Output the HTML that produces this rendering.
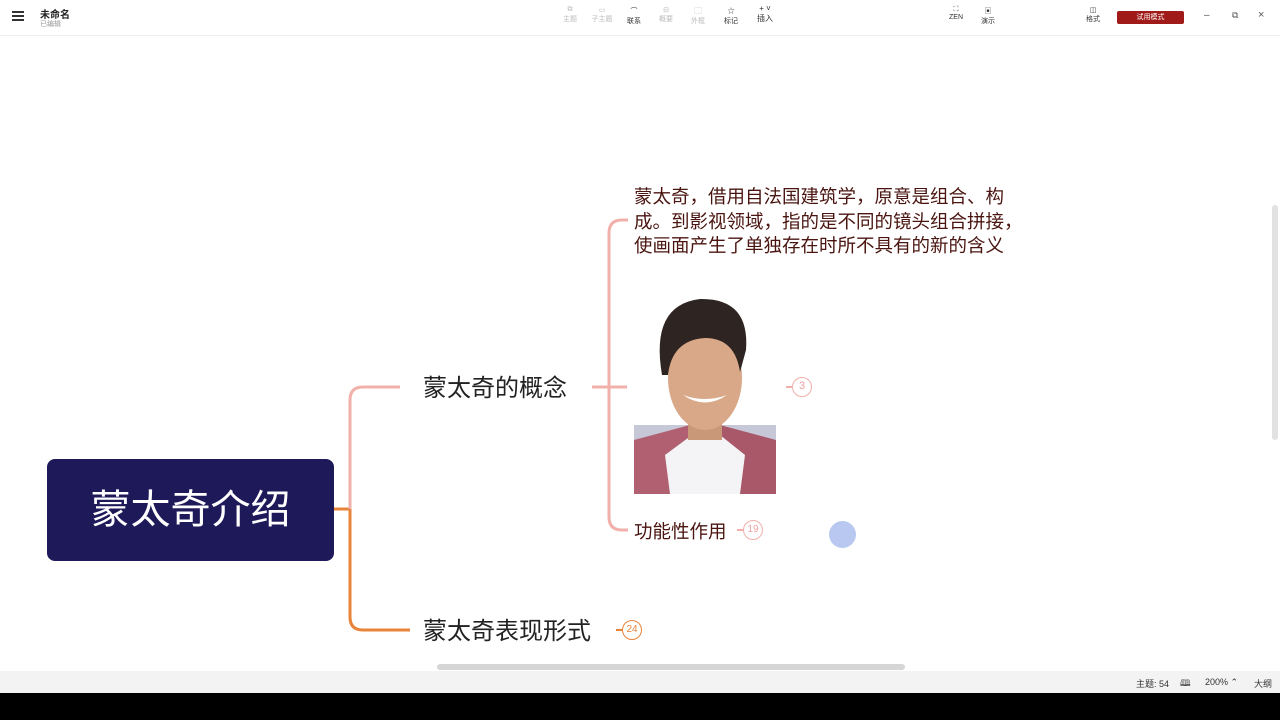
<!DOCTYPE html>
<html><head><meta charset="utf-8"><style>
*{margin:0;padding:0;box-sizing:border-box}
body{width:1280px;height:720px;overflow:hidden;background:#fff;font-family:"Liberation Sans","Noto Sans CJK SC",sans-serif;position:relative}
.abs{position:absolute}
.tb{top:0;left:0;width:1280px;height:36px;background:#fff;border-bottom:1px solid #eee}
.ti{font-size:7px;color:#bbb;text-align:center;width:24px}
.ti.d{color:#333}
.st{top:671px;left:0;width:1280px;height:22px;background:#f3f3f3;font-size:9px;color:#333}
.blk{top:693px;left:0;width:1280px;height:27px;background:#000}
.t{color:#222;font-size:24px}
.c{border:1.5px solid;border-radius:50%;font-size:11px;text-align:center;line-height:17px;width:20px;height:20px;background:#fff}
</style></head><body>
<div class="abs tb">
 <div class="abs" style="left:12px;top:11px;width:12px;height:2px;background:#333;box-shadow:0 4px 0 #333,0 8px 0 #333"></div>
 <div class="abs" style="left:40px;top:6px;font-size:10px;color:#222;font-weight:bold">未命名</div>
 <div class="abs" style="left:40px;top:19px;font-size:7px;color:#999">已编辑</div>
 <div class="abs ti" style="left:558px;top:6px">⧉<br>主题</div>
 <div class="abs ti" style="left:590px;top:6px">▭<br>子主题</div>
 <div class="abs ti d" style="left:622px;top:6px">⌒<br>联系</div>
 <div class="abs ti" style="left:654px;top:6px">⊟<br>概要</div>
 <div class="abs ti" style="left:686px;top:6px">▢<br>外框</div>
 <div class="abs ti d" style="left:719px;top:6px">☆<br>标记</div>
 <div class="abs ti d" style="left:753px;top:4px;font-size:8px">+ ˅<br>插入</div>
 <div class="abs ti d" style="left:944px;top:6px">⛶<br>ZEN</div>
 <div class="abs ti d" style="left:976px;top:6px">▣<br>演示</div>
 <div class="abs ti d" style="left:1081px;top:6px">◫<br>格式</div>
 <div class="abs" style="left:1117px;top:11px;width:67px;height:13px;background:#a11a1a;border-radius:2px;color:#fff;font-size:7px;text-align:center;line-height:13px">试用模式</div>
 <div class="abs" style="left:1204px;top:10px;font-size:10px;color:#555">–</div>
 <div class="abs" style="left:1232px;top:10px;font-size:9px;color:#555">⧉</div>
 <div class="abs" style="left:1258px;top:9px;font-size:11px;color:#555">×</div>
</div>
<svg class="abs" style="left:0;top:0" width="1280" height="670">
 <path d="M334 509 H350" stroke="#e8843a" stroke-width="3" fill="none"/>
 <path d="M350 509 V400 Q350 387 363 387 H400" stroke="#f2b0aa" stroke-width="3" fill="none"/>
 <path d="M350 509 V617 Q350 630 363 630 H410" stroke="#e8843a" stroke-width="3" fill="none"/>
 <path d="M592 387 H627 M609 387 V233 Q609 220 622 220 H628 M609 387 V517 Q609 530 622 530 H628" stroke="#f2b0aa" stroke-width="3" fill="none"/>
 <path d="M786 387 H792 M737 530 H743" stroke="#f2b0aa" stroke-width="2"/>
 <path d="M616 630 H622" stroke="#e8843a" stroke-width="2"/>
 <g>
  <rect x="634" y="425" width="142" height="69" fill="#c6c8d8"/>
  <path d="M634 440 L690 425 L700 494 L634 494Z" fill="#b06070"/>
  <path d="M776 440 L720 425 L712 494 L776 494Z" fill="#a85868"/>
  <path d="M665 455 L692 435 H720 L745 455 L740 494 H670Z" fill="#f4f4f6"/>
  <rect x="688" y="400" width="34" height="40" fill="#c89878"/>
  <ellipse cx="705" cy="378" rx="37" ry="52" fill="#d8a888"/>
  <path d="M662 375 Q650 305 700 299 Q750 298 746 350 L740 372 Q735 338 705 338 Q672 340 668 375Z" fill="#2e2522"/>
  <path d="M683 395 Q705 410 727 395 Q705 403 683 395Z" fill="#fff"/>
 </g>
</svg>
<div class="abs" style="left:47px;top:459px;width:287px;height:102px;background:#1e1a5a;border-radius:8px;color:#fff;font-size:40px;text-align:center;line-height:102px">蒙太奇介绍</div>
<div class="abs t" style="left:423px;top:368px">蒙太奇的概念</div>
<div class="abs t" style="left:423px;top:611px">蒙太奇表现形式</div>
<div class="abs" style="left:634px;top:185px;font-size:18.5px;line-height:24.5px;color:#4a1510;white-space:nowrap">蒙太奇，借用自法国建筑学，原意是组合、构<br>成。到影视领域，指的是不同的镜头组合拼接，<br>使画面产生了单独存在时所不具有的新的含义</div>
<div class="abs" style="left:634px;top:518px;font-size:18.5px;color:#4a1510">功能性作用</div>
<div class="abs c" style="left:792px;top:377px;border-color:#f2b0aa;color:#f2a0a0">3</div>
<div class="abs c" style="left:743px;top:520px;border-color:#f2b0aa;color:#f2a0a0;font-size:10px">19</div>
<div class="abs c" style="left:622px;top:620px;border-color:#e8843a;color:#e8843a;font-size:10px">24</div>
<div class="abs" style="left:829px;top:521px;width:27px;height:27px;border-radius:50%;background:#b8c8f0"></div>
<div class="abs" style="left:437px;top:664px;width:468px;height:6px;background:#d6d6d6;border-radius:3px"></div>
<div class="abs" style="left:1272px;top:205px;width:6px;height:235px;background:#e2e2e2;border-radius:3px"></div>
<div class="abs st">
 <span class="abs" style="left:1136px;top:6px">主题: 54</span>
 <span class="abs" style="left:1180px;top:5px">🕮</span>
 <span class="abs" style="left:1205px;top:6px">200% ⌃</span>
 <span class="abs" style="left:1254px;top:6px">大纲</span>
</div>
<div class="abs blk"></div>
</body></html>
